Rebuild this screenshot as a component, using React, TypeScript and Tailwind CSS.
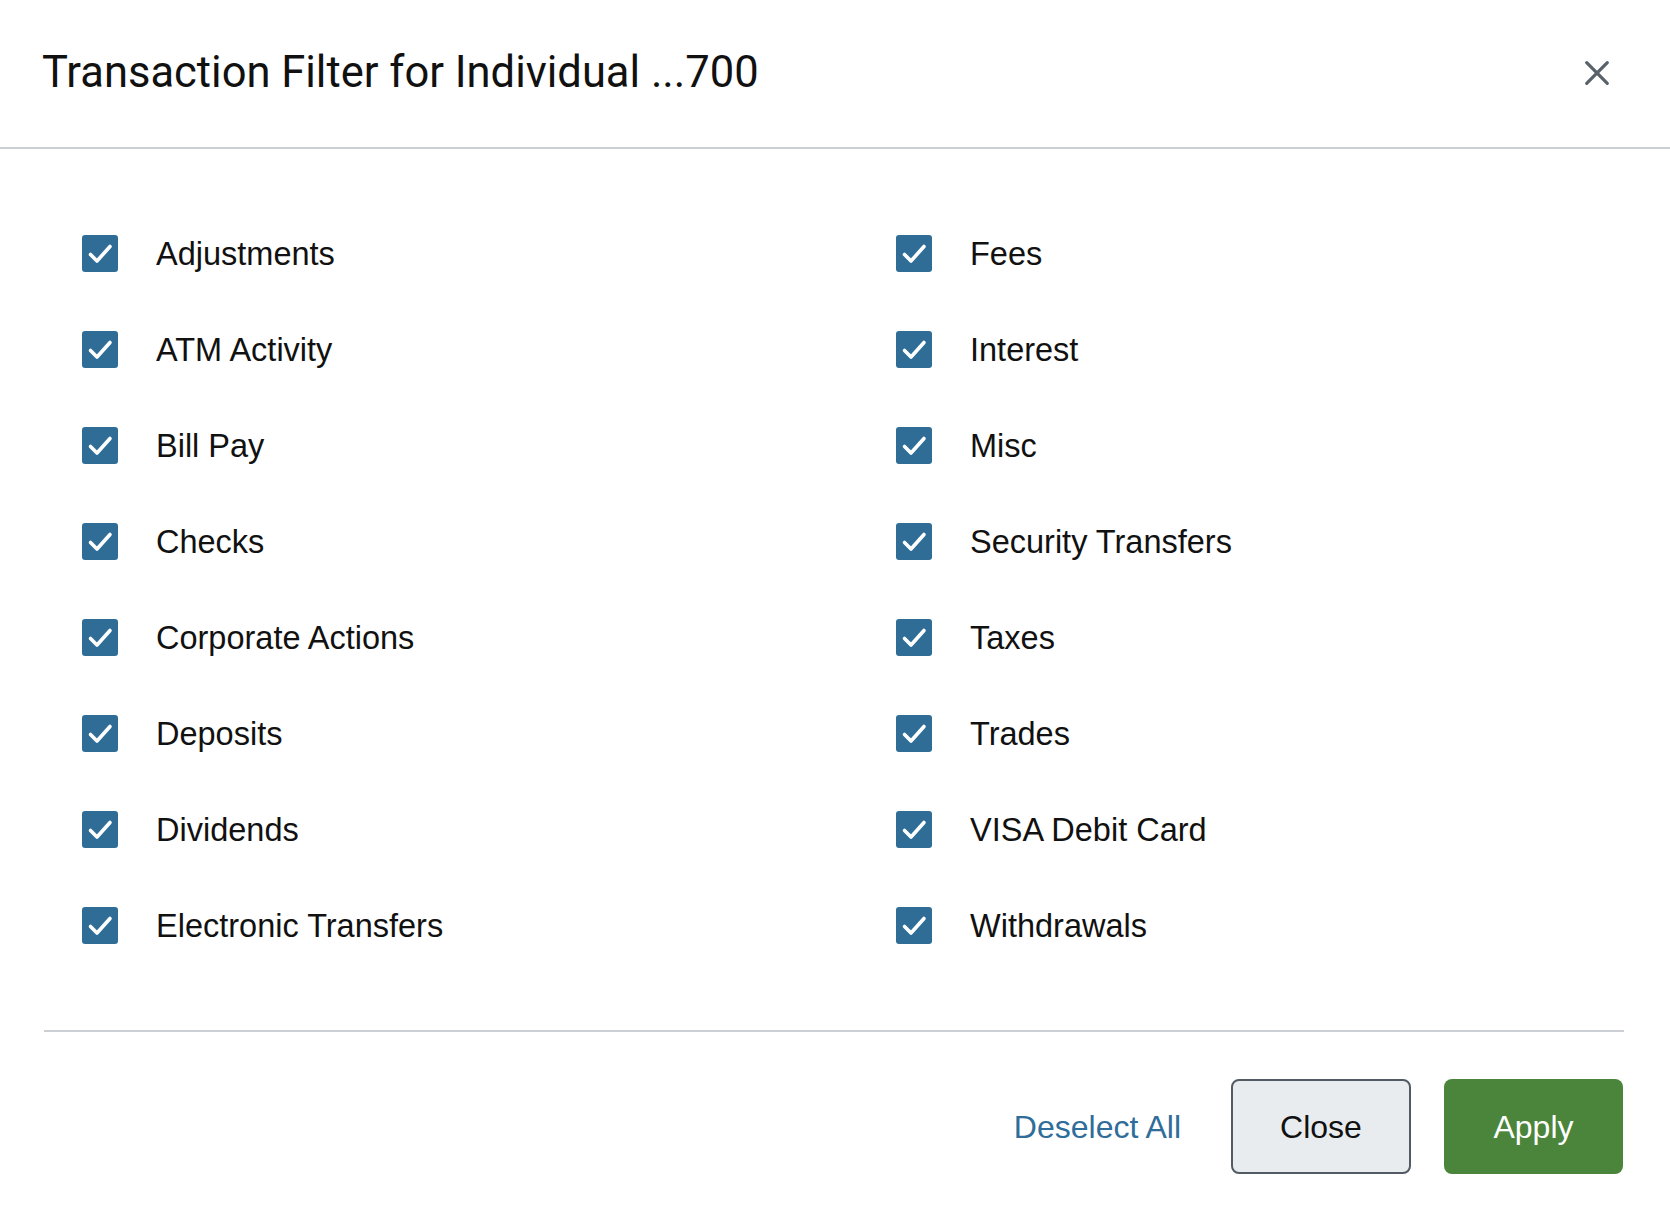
import React from "react";

const left = [
  "Adjustments",
  "ATM Activity",
  "Bill Pay",
  "Checks",
  "Corporate Actions",
  "Deposits",
  "Dividends",
  "Electronic Transfers",
];

const right = [
  "Fees",
  "Interest",
  "Misc",
  "Security Transfers",
  "Taxes",
  "Trades",
  "VISA Debit Card",
  "Withdrawals",
];

function CheckRow({ label }: { label: string }) {
  return (
    <label className="flex h-[96px] items-center">
      <span className="flex h-[37px] w-[36px] items-center justify-center rounded-[3px] bg-[#2f6d96]">
        <svg width="36" height="37" viewBox="0 0 36 37" fill="none">
          <path
            d="M8.5 19.5L15 26L28 11.5"
            stroke="#ffffff"
            strokeWidth="3.6"
            strokeLinecap="round"
            strokeLinejoin="round"
          />
        </svg>
      </span>
      <span className="ml-[38px] pt-[2px] text-[32.5px] leading-none text-[#111111] [font-family:'Liberation_Sans',Arial,sans-serif]">
        {label}
      </span>
    </label>
  );
}

export default function App() {
  return (
    <div className="h-[1224px] w-full bg-white">
      <header className="flex h-[149px] items-center justify-between border-b-2 border-[#cbcfd3] pl-[42px] pr-[60px] pb-[2px]">
        <h1 className="text-[43.5px] font-normal leading-none text-[#111111] [font-family:Roboto,'Liberation_Sans',sans-serif]">
          Transaction Filter for Individual ...700
        </h1>
        <button className="flex h-[26px] w-[26px] items-center justify-center" aria-label="Close">
          <svg width="26" height="26" viewBox="0 0 24 24" fill="none">
            <path
              d="M2.5 2.5L21.5 21.5M21.5 2.5L2.5 21.5"
              stroke="#59626b"
              strokeWidth="3"
              strokeLinecap="round"
            />
          </svg>
        </button>
      </header>

      <div className="grid grid-cols-[814px_1fr] pl-[82px] pt-[56px]">
        <div className="flex flex-col">
          {left.map((l) => (
            <CheckRow key={l} label={l} />
          ))}
        </div>
        <div className="flex flex-col">
          {right.map((l) => (
            <CheckRow key={l} label={l} />
          ))}
        </div>
      </div>

      <div className="ml-[44px] mr-[46px] mt-[57px] h-[2px] bg-[#cbcfd3]" />

      <div className="mr-[47px] mt-[47px] flex items-center justify-end [font-family:'Liberation_Sans',Arial,sans-serif]">
        <button className="mr-[50px] text-[32px] leading-none text-[#2f6d9a]">Deselect All</button>
        <button className="h-[95px] w-[180px] rounded-[8px] border-2 border-[#525a63] bg-[#e9ecee] text-[32px] leading-none text-[#111111]">
          Close
        </button>
        <button className="ml-[33px] h-[95px] w-[179px] rounded-[8px] bg-[#4a853b] text-[32px] leading-none text-white">
          Apply
        </button>
      </div>
    </div>
  );
}
